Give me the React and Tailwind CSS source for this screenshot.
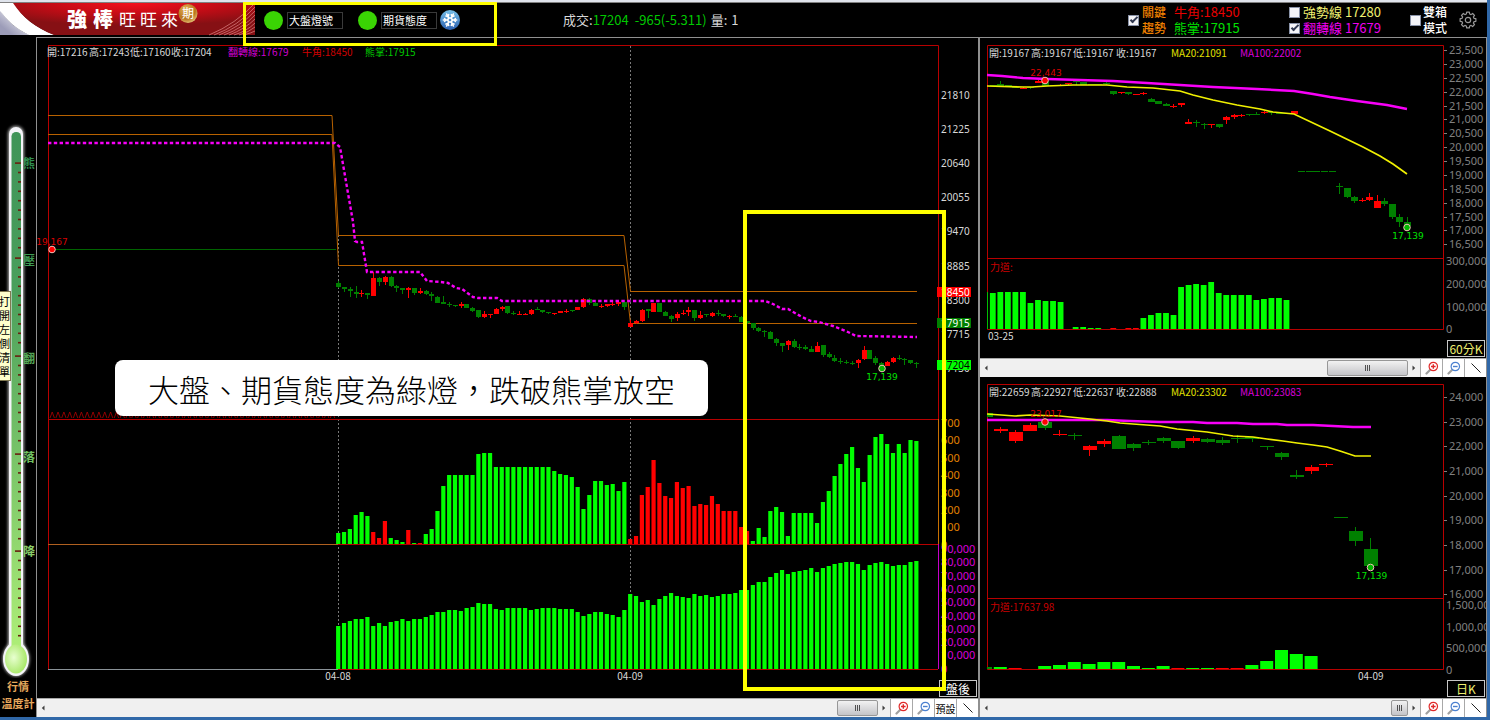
import React, { useState } from 'react';
import { Snowflake } from 'lucide-react';

// Candle rows: [color, body top, body bottom, high, low], three units to a chart pixel
const mainCandles = [
    ['g', 189, 201, 184, 203], ['g', 201, 207, 201, 215], ['g', 207, 213, 201, 230], ['g', 215, 223, 199, 235], ['r', 219, 223, 209, 231],
    ['g', 219, 225, 219, 237], ['r', 174, 227, 155, 229], ['g', 174, 186, 172, 197], ['r', 171, 186, 168, 196], ['g', 171, 198, 168, 202],
    ['g', 198, 203, 196, 215], ['g', 203, 209, 203, 221], ['r', 203, 210, 201, 233], ['g', 204, 219, 203, 225], ['r', 213, 219, 205, 221],
    ['g', 212, 223, 211, 225], ['g', 223, 228, 217, 242], ['g', 230, 248, 229, 249], ['g', 247, 252, 227, 253], ['g', 252, 256, 246, 262],
    ['g', 256, 259, 254, 261], ['r', 252, 259, 247, 264], ['g', 252, 264, 251, 265], ['g', 264, 272, 262, 277], ['g', 271, 291, 270, 293],
    ['r', 283, 291, 273, 293], ['r', 282, 285, 282, 294], ['r', 267, 282, 264, 283], ['r', 262, 267, 258, 273], ['g', 259, 279, 258, 282],
    ['g', 279, 282, 273, 286], ['r', 281, 284, 274, 285], ['r', 281, 284, 280, 285], ['r', 269, 281, 267, 285], ['g', 267, 270, 262, 271],
    ['g', 270, 277, 269, 279], ['g', 277, 280, 275, 281], ['r', 279, 282, 278, 285], ['r', 273, 279, 272, 280], ['r', 272, 276, 268, 278],
    ['g', 270, 273, 269, 277], ['r', 262, 270, 261, 271], ['r', 237, 262, 233, 263], ['g', 237, 249, 233, 255], ['g', 249, 258, 247, 259],
    ['r', 257, 261, 253, 264], ['r', 252, 258, 251, 261], ['r', 252, 255, 245, 258], ['r', 247, 251, 241, 257], ['g', 246, 261, 245, 269],
    ['r', 309, 320, 300, 321], ['r', 304, 309, 300, 311], ['r', 269, 304, 267, 307], ['g', 268, 274, 266, 293], ['r', 250, 275, 248, 277],
    ['g', 249, 275, 248, 276], ['g', 276, 287, 272, 289], ['g', 287, 296, 284, 306], ['r', 281, 294, 276, 303], ['r', 278, 282, 269, 284],
    ['r', 271, 277, 261, 288], ['g', 271, 294, 269, 303], ['r', 284, 294, 272, 297], ['g', 282, 286, 281, 291], ['r', 279, 287, 276, 290],
    ['g', 278, 282, 269, 288], ['g', 282, 288, 281, 291], ['r', 288, 291, 284, 297], ['g', 288, 291, 282, 292], ['g', 291, 305, 289, 306],
    ['g', 304, 310, 303, 311], ['g', 309, 325, 308, 329], ['g', 325, 333, 322, 336], ['g', 333, 336, 331, 352], ['g', 335, 357, 333, 358],
    ['g', 357, 370, 353, 377], ['g', 370, 378, 368, 395], ['r', 363, 375, 359, 390], ['g', 362, 381, 356, 385], ['g', 380, 383, 372, 390],
    ['g', 382, 386, 374, 391], ['g', 386, 395, 378, 397], ['r', 377, 395, 366, 397], ['g', 376, 404, 374, 410], ['g', 403, 410, 397, 415],
    ['g', 413, 423, 406, 426], ['g', 423, 427, 413, 433], ['g', 426, 429, 419, 433], ['g', 428, 431, 422, 435], ['r', 420, 430, 416, 444],
    ['r', 391, 418, 377, 420], ['g', 391, 416, 389, 417], ['g', 415, 428, 408, 434], ['g', 428, 443, 427, 448], ['r', 426, 437, 423, 439],
    ['r', 414, 426, 412, 428], ['g', 413, 416, 406, 421], ['g', 416, 421, 415, 434], ['g', 421, 429, 419, 432], ['g', 430, 433, 426, 444],
];

const hourCandles = [
    ['g', 134, 137, 134, 137], ['g', 133, 137, 123, 138], ['g', 136, 139, 136, 139], ['g', 142, 145, 142, 145], ['r', 143, 147, 141, 148],
    ['g', 142, 145, 142, 146], ['r', 122, 129, 121, 130], ['g', 122, 138, 118, 139], ['g', 136, 139, 136, 139], ['r', 134, 137, 133, 139],
    ['r', 130, 133, 130, 134], ['g', 122, 126, 117, 136], ['g', 126, 134, 126, 135], ['g', 131, 134, 131, 134], ['g', 131, 134, 131, 134],
    ['g', 129, 132, 127, 136], ['g', 153, 163, 152, 166], ['r', 156, 160, 155, 161], ['g', 157, 161, 156, 166], ['r', 162, 165, 162, 165],
    ['r', 159, 162, 156, 166], ['g', 176, 185, 174, 187], ['g', 183, 192, 183, 192], ['g', 192, 197, 190, 198], ['r', 197, 200, 193, 204],
    ['r', 190, 195, 188, 201], ['r', 245, 251, 236, 252], ['g', 246, 250, 239, 260], ['g', 251, 254, 249, 266], ['r', 252, 256, 251, 264],
    ['g', 253, 260, 251, 264], ['r', 231, 240, 229, 251], ['r', 225, 230, 223, 236], ['r', 225, 228, 221, 232], ['g', 222, 226, 222, 227],
    ['g', 222, 225, 215, 226], ['r', 215, 220, 212, 223], ['g', 216, 219, 212, 225], ['g', 218, 221, 218, 221], ['g', 219, 222, 219, 222],
    ['r', 213, 221, 213, 221], ['g', 393, 395, 393, 395], ['g', 393, 395, 393, 395], ['g', 393, 395, 393, 395], ['g', 393, 395, 393, 395],
    ['g', 393, 395, 393, 395], ['g', 438, 442, 429, 461], ['g', 444, 471, 443, 474], ['g', 472, 482, 468, 490], ['r', 480, 483, 474, 487],
    ['r', 472, 480, 460, 484], ['r', 483, 503, 466, 504], ['g', 482, 493, 474, 498], ['g', 493, 530, 492, 538], ['g', 531, 547, 523, 561],
    ['g', 547, 558, 530, 560],
];

const dayCandles = [
    ['r', 148, 153, 141, 158], ['r', 156, 183, 151, 188], ['r', 134, 152, 130, 153], ['g', 127, 143, 122, 150], ['r', 163, 166, 150, 167],
    ['g', 166, 169, 159, 180], ['r', 197, 211, 195, 228], ['r', 183, 192, 177, 201], ['g', 167, 206, 165, 208], ['g', 193, 204, 190, 212],
    ['g', 187, 190, 179, 194], ['g', 173, 183, 170, 188], ['g', 183, 204, 182, 206], ['r', 174, 183, 169, 188], ['g', 177, 186, 174, 188],
    ['g', 179, 188, 171, 194], ['g', 173, 175, 166, 189], ['g', 172, 177, 170, 185], ['g', 198, 202, 197, 211], ['g', 219, 230, 216, 241],
    ['g', 284, 291, 271, 298], ['r', 261, 274, 254, 283], ['r', 253, 256, 248, 262], ['g', 411, 413, 411, 413], ['g', 454, 482, 442, 498],
    ['g', 507, 557, 475, 558],
];

// Bar heights, a negative number is a red bar, zero is an empty period
const powerBars = [
    11, 12, 15, 29, 32, 28, -12, -6, -23, 6, 4, 2, -14, 1, -1, 10, 15, 33, 58, 69, 69, 69, 69, 69, 90, 91, 91,
    77, 77, 77, 77, 77, 77, 77, 77, 77, 77, 73, 70, 69, 67, 57, 35, 49, 63, 63, 59, 60, 53, 62,
    -5, -8, -49, -57, -84, -61, -48, -46, -62, -56, -58, -38, -40, -39, -48, -40, -33, -33, -33, -17, -13,
    3, 16, 7, 33, 37, 32, 8, 31, 31, 31, 31, 21, 42, 53, 68, 80, 90, 97, 76, 62, 89, 107, 110, 100, 91, 100, 91, 104, 103,
];

const volumeBars = [
    43, 46, 48, 50, 50, 52, 43, 46, 43, 47, 48, 50, 48, 50, 50, 52, 54, 57, 57, 59, 59, 58, 61, 62, 66, 65, 65, 60, 59, 61, 61, 61, 61, 59,
    60, 61, 61, 61, 60, 60, 60, 57, 53, 55, 57, 57, 55, 54, 52, 59,
    75, 73, 67, 69, 64, 70, 73, 76, 73, 72, 71, 75, 73, 74, 72, 73, 75, 75, 76, 79, 79, 84, 87, 87, 92, 96, 99, 95, 97, 98, 99, 101, 97,
    101, 103, 105, 106, 107, 107, 105, 99, 104, 106, 107, 105, 103, 104, 104, 107, 108,
];

const hourBars = [
    36, 37, 37, 37, 37, 26, 29, 28, 28, 27, 0, 2, 2, 1, 1, 0, -1, 0, -1, -1, 11, 14, 16, 16, 14, 42, 44, 45, 44, 47,
    36, 34, 34, 34, 34, 29, 30, 31, 31, 29, 0, 0, 0, 0, 0, 0, 0, 0, 0, 0, 0, 0, 0, 0, 0,
];

const dayBars = [2, -1, 0, 3, 4, 7, 5, 7, 7, 3, 1, 3, -1, 1, 1, -1, -1, 4, 8, 19, 15, 13, 0, 0, 0];

const hourMa100 = '987,75 1002,76 1023,78 1047,79 1080,80 1113,81 1147,83 1180,85 1213,87 1257,89 1294,91 1313,94 1330,97 1357,101 1387,105 1407,109';
const hourMa20 = '987,86 1023,87 1032,87 1047,86 1073,85 1107,85 1127,87 1153,88 1180,91 1193,95 1213,100 1237,105 1260,109 1273,112 1294,114 1330,131 1363,147 1380,156 1393,164 1407,174';
const dayMa100 = '987,420 1107,420 1130,421 1160,422 1193,422 1207,423 1237,423 1253,424 1277,424 1287,425 1313,425 1333,426 1353,427 1371,427';
const dayMa20 = '987,414 1015,416 1030,415 1060,416 1090,419 1107,421 1120,423 1133,424 1160,426 1177,429 1207,432 1233,436 1253,437 1267,439 1283,441 1297,443 1313,445 1327,447 1340,451 1355,456 1371,456';
const flipLine = '48,143 335,143 340,147 353,222 355,241 357,242 362,242 367,272 420,272 427,281 441,282 448,283 456,288 462,289 473,297 478,298 497,298 502,301 765,301 773,304 782,309 788,309 802,317 811,321 819,322 833,326 848,332 856,336 917,337';

const Label = ({ x, y, anchor = 'start', className, children }) => (
    <text x={x} y={y} textAnchor={anchor} className={className}>{children}</text>
);

const Candles = ({ rows, x0, step, width, top }) => (
    <g shapeRendering="crispEdges">
        {rows.map(([color, bodyTop, bodyBottom, high, low], i) => {
            const x = x0 + step * i;
            const fill = color === 'r' ? '#ff0000' : '#008000';
            return (
                <g key={i} fill={fill}>
                    <rect x={Math.floor(x)} y={top + high / 3} width="1" height={(low - high) / 3} />
                    <rect x={x - width / 2} y={top + bodyTop / 3} width={width} height={Math.max(1, (bodyBottom - bodyTop) / 3)} />
                </g>
            );
        })}
    </g>
);

const Bars = ({ rows, x0, step, width, base }) => (
    <g>
        {rows.map((value, i) => {
            const height = Math.abs(value) || 1;
            const fill = value > 0 ? '#00ff00' : value < 0 ? '#ff0000' : '#8aa0a8';
            return <rect key={i} x={x0 + step * i - width / 2} y={value === 0 ? base : base - height} width={width} height={height} fill={fill} />;
        })}
    </g>
);

const Marker = ({ x, y, fill }) => <circle cx={x} cy={y} r="3.3" fill={fill} stroke="#f0c0b8" strokeWidth="1" />;

const Banner = () => (
    <svg viewBox="0 3 255 33" className="h-[33px] w-[255px] shrink-0 self-start" aria-label="強棒旺旺來">
        <defs>
            <radialGradient id="bannerRed" cx="0.5" cy="0" r="0.7">
                <stop offset="0" stopColor="#f4101c" />
                <stop offset="0.5" stopColor="#c40c16" />
                <stop offset="1" stopColor="#861014" />
            </radialGradient>
            <linearGradient id="bannerGrey" x1="0" y1="1" x2="1" y2="0">
                <stop offset="0.2" stopColor="#9c9cb8" />
                <stop offset="0.9" stopColor="#ffffff" />
            </linearGradient>
            <radialGradient id="gold" cx="0.4" cy="0.3" r="0.8">
                <stop offset="0" stopColor="#e8b860" />
                <stop offset="0.6" stopColor="#b8741c" />
                <stop offset="1" stopColor="#f0d890" />
            </radialGradient>
        </defs>
        <path d="M0 10C8 22 18 30 30 35H0z" fill="url(#bannerGrey)" />
        <path d="M0 3H14C22 17 36 28 55 35H29C16 29 7 20 0 11z" fill="#ffffff" />
        <path d="M13 3H255V35H54C36 28 22 17 13 3z" fill="url(#bannerRed)" />
        <g stroke="#e08888" strokeWidth="0.7" fill="none">
            <path d="M209 35Q236 24 255 3M214 35Q238 26 255 7M219 35Q240 27 255 11M224 35Q243 28 255 15M229 35Q245 29 255 19M234 35Q247 31 255 23M239 35Q249 32 255 27M244 35Q251 33 255 31" />
        </g>
        <g fill="#ffffff">
            <text x="67" y="27" className="text-[20px] font-black">強</text>
            <text x="93" y="27" className="text-[20px] font-black">棒</text>
            <text x="119" y="26" className="text-[17px]">旺</text>
            <text x="140" y="26" className="text-[17px]">旺</text>
            <text x="161" y="26" className="text-[17px]">來</text>
        </g>
        <circle cx="188" cy="13.5" r="9.5" fill="url(#gold)" />
        <text x="188" y="18" textAnchor="middle" fill="#ffffff" className="text-[12px]">期</text>
    </svg>
);

// eight rounded teeth, four outline points each
const gearPoints = Array.from({ length: 8 }, (_, i) =>
    [[-0.27, 6.2], [-0.17, 8], [0.17, 8], [0.27, 6.2]]
        .map(([offset, radius]) => {
            const angle = (i * Math.PI) / 4 + offset;
            return `${(9 + radius * Math.sin(angle)).toFixed(2)},${(9 - radius * Math.cos(angle)).toFixed(2)}`;
        })
        .join(' ')
).join(' ');

const Gear = () => (
    <svg viewBox="0 0 18 18" className="size-[18px]" fill="none" stroke="#989898" strokeWidth="1.2" strokeLinejoin="round">
        <polygon points={gearPoints} />
        <circle cx="9" cy="9" r="2.7" />
    </svg>
);

const SignalLight = ({ id, label }) => (
    <div className="flex items-center gap-1">
        <span className="size-[19px] rounded-full bg-[#3ad404]" />
        <input
            id={id}
            aria-label={label}
            value={label}
            readOnly
            className="h-[17px] w-14 border border-[#3a3a3a] bg-black pl-px text-[11px] leading-none text-white outline-none"
        />
    </div>
);

const Check = ({ id, label, checked, onChange }) => (
    <input
        id={id}
        type="checkbox"
        aria-label={label}
        checked={checked}
        onChange={onChange}
        className="relative size-[11px] shrink-0 appearance-none border border-[#8a93a8] bg-[#f4f4f8] before:absolute before:left-[3px] before:-top-px before:hidden before:h-2 before:w-1 before:rotate-45 before:border-r-2 before:border-b-2 before:border-[#303850] checked:before:block"
    />
);

const Magnifier = ({ color, plus }) => (
    <svg viewBox="0 0 14 14" className="size-[14px]">
        <path d="M1.5 12.5L5 9" stroke="#a0a0a0" strokeWidth="2.2" strokeLinecap="round" />
        <circle cx="8.3" cy="5.5" r="4.2" fill="#ffffff" stroke={color} strokeWidth="1.2" />
        <path d={plus ? 'M6 5.5H10.6M8.3 3.2V7.8' : 'M6 5.5H10.6'} stroke={color} strokeWidth="1.4" />
    </svg>
);

const toolClass = 'flex w-[22px] items-center justify-center border-l border-[#a8a8a8] bg-white';

const ScrollRow = ({ thumb, withPreset }) => (
    <div className="flex h-[19px] border-t border-[#a8a8a8] bg-[#f0f0f0]">
        <button aria-label="向左" className="flex w-3 items-center justify-center">
            <svg viewBox="0 0 4 6" className="h-1.5 w-1"><path d="M3.5 0.5V5.5L0.8 3z" fill="#404040" /></svg>
        </button>
        <div className="flex flex-1 justify-end">
            <div className={`my-px flex items-center justify-center gap-px rounded-[2px] border border-[#979797] bg-linear-to-b from-[#f2f2f2] to-[#c4c4c8] ${thumb}`}>
                <span className="h-1.5 w-px bg-[#505050]" />
                <span className="h-1.5 w-px bg-[#505050]" />
                <span className="h-1.5 w-px bg-[#505050]" />
            </div>
        </div>
        <button aria-label="向右" className="flex w-3 items-center justify-center">
            <svg viewBox="0 0 4 6" className="h-1.5 w-1"><path d="M0.5 0.5V5.5L3.2 3z" fill="#404040" /></svg>
        </button>
        <button aria-label="放大" className={toolClass}><Magnifier color="#e02a2a" plus /></button>
        <button aria-label="縮小" className={toolClass}><Magnifier color="#4a80d0" /></button>
        {withPreset && <button className={`${toolClass} text-[10px] whitespace-nowrap text-black`}>預設</button>}
        <button aria-label="畫線" className={toolClass}>
            <svg viewBox="0 0 10 10" className="size-[10px]"><path d="M0.5 0.5L9.5 9.5" stroke="#202020" /></svg>
        </button>
    </div>
);

const PeriodButton = ({ color, children }) => (
    <button className={`absolute right-px bottom-px flex h-[17px] w-[38px] items-center justify-center border border-[#c8c8c8] bg-black text-[12px] leading-none ${color}`}>
        {children}
    </button>
);

const thermoLabels = [['熊', 163, '#2f8f50'], ['壓', 260, '#3f9c54'], ['翻', 358, '#55a858'], ['落', 457, '#70c060'], ['降', 551, '#88cc68']];
const majorTicks = [163, 258, 356, 454, 551];

const Thermometer = () => (
    <div className="relative flex flex-col overflow-hidden">
        <svg viewBox="0 37 36 641" className="w-9">
            <defs>
                <linearGradient id="tube" x1="0" y1="0" x2="0" y2="1">
                    <stop offset="0" stopColor="#3f9458" />
                    <stop offset="0.3" stopColor="#4a9f5c" />
                    <stop offset="1" stopColor="#b0f078" />
                </linearGradient>
                <radialGradient id="bulb" cx="0.4" cy="0.45" r="0.6">
                    <stop offset="0" stopColor="#e8ffd0" />
                    <stop offset="1" stopColor="#a8e868" />
                </radialGradient>
                <filter id="glow" x="-50%" width="200%"><feGaussianBlur stdDeviation="1.5" /></filter>
            </defs>
            <rect x="8" y="126" width="16" height="530" rx="8" fill="#b0b0b0" filter="url(#glow)" />
            <ellipse cx="16" cy="659" rx="13.5" ry="17.5" fill="#b0b0b0" filter="url(#glow)" />
            <rect x="9" y="127" width="14" height="530" rx="7" fill="#f4f4f8" />
            <ellipse cx="16" cy="659" rx="13" ry="17" fill="#f4f4f8" />
            <rect x="11.5" y="132" width="9.5" height="525" rx="4.5" fill="url(#tube)" />
            <ellipse cx="16" cy="659" rx="11" ry="14.5" fill="url(#bulb)" />
            {majorTicks.map((y) => (
                <g key={y} fill="#6a2010">
                    <rect x="15" y={y - 0.7} width="6" height="1.6" />
                    {[1, 2, 3, 4, 5, 6, 7, 8, 9].map((n) => (
                        <rect key={n} x="18" y={y + n * 9.4 - 0.7} width="3" height="1.6" />
                    ))}
                </g>
            ))}
            {thermoLabels.map(([text, y, color]) => (
                <text key={text} x="23" y={y + 5} fill={color} className="text-[12px] font-bold">{text}</text>
            ))}
        </svg>
        <div className="flex flex-col items-center text-[11px] leading-[17px] font-bold whitespace-nowrap text-[#e8a85c]">
            <span>行情</span>
            <span>溫度計</span>
        </div>
        <button className="absolute top-[254px] left-0 flex h-[90px] w-[11px] justify-end overflow-hidden border border-l-0 border-[#807850] bg-[#ffffcc] text-[11px] leading-[14px] text-black">
            <span className="w-[11px] shrink-0 py-[2px] break-all">打開左側清單</span>
        </button>
    </div>
);

const priceLabels = [21810, 21225, 20640, 20055, 19470, 18885, 18300, 17715, 17130];

const MainChart = () => (
    <svg viewBox="37 38 941 660" className="block h-auto w-full">
        {/* grid and frame */}
        <path d="M338.5 235V669M630.5 46V669" stroke="#787878" strokeDasharray="2 2" />
        <path d="M48 45.5H938.5V419M48.5 45V669M48 419.5H938M48 544.5H938M338 669.5H938" stroke="#b80000" fill="none" />
        <path d="M48 544.5H338" stroke="#b06020" />
        <path d="M48 669.5H338" stroke="#8a9298" />
        <path d="M938.5 419V544" stroke="#c87000" />
        <path d="M938.5 544V669" stroke="#c800c8" />

        {/* bull horn / bear paw levels */}
        <g stroke="#b86200" fill="none">
            <path d="M48 115.5H332L338.5 235.5H624L630.5 291.5H917" />
            <path d="M48 134.5H332L338.5 265.5H624L630.5 323.5H917" />
        </g>
        <path d="M48 249.5H336" stroke="#006400" />
        <Candles rows={mainCandles} x0={338.5} step={5.84} width={5} top={220} />
        <polyline points={flipLine} fill="none" stroke="#f800f8" strokeWidth="2.4" strokeDasharray="3.4 2.4" />

        <g stroke="#b00000" fill="none">
            {Array.from({ length: 49 }, (_, i) => (
                <path key={i} d={`M${50 + i * 5.84} 418l2.2 -6l2.2 6`} strokeWidth="0.8" />
            ))}
        </g>
        <Bars rows={powerBars} x0={338.2} step={5.84} width={4.2} base={544} />
        <Bars rows={volumeBars} x0={338.2} step={5.84} width={4.2} base={669} />

        <g className="text-[10px]">
            <Label x="47" y="56" className="fill-[#d8d8d8]">開:17216</Label>
            <Label x="89" y="56" className="fill-[#d8d8d8]">高:17243</Label>
            <Label x="130" y="56" className="fill-[#d8d8d8]">低:17160</Label>
            <Label x="171" y="56" className="fill-[#d8d8d8]">收:17204</Label>
            <Label x="228" y="56" className="fill-[#d000d0]">翻轉線:17679</Label>
            <Label x="302" y="56" className="fill-[#d00000]">牛角:18450</Label>
            <Label x="365" y="56" className="fill-[#00c800]">熊掌:17915</Label>
            <Label x="338" y="680" anchor="middle" className="fill-[#d8d8d8]">04-08</Label>
            <Label x="630" y="680" anchor="middle" className="fill-[#d8d8d8]">04-09</Label>
            <g className="font-['Noto_Sans']">
                {priceLabels.map((price, i) => (
                    <Label key={price} x="941" y={98.5 + i * 34.2} className="fill-[#d8d8d8]">{price}</Label>
                ))}
                <rect x="937" y="287" width="34" height="10" fill="#ff0000" />
                <rect x="937" y="318" width="34" height="10" fill="#008000" />
                <rect x="937" y="360" width="34" height="10" fill="#00ff00" />
                <Label x="941" y="296" className="fill-white">18450</Label>
                <Label x="941" y="327" className="fill-white">17915</Label>
                <Label x="941" y="369" className="fill-black">17204</Label>
            </g>
        </g>

        <g className="font-['Noto_Sans'] text-[11px]">
            {[700, 600, 500, 400, 300, 200, 100, 0].map((v, i) => (
                <Label key={v} x="941" y={427 + i * 17.4} className="fill-[#e08000]">{v}</Label>
            ))}
            {['90,000', '80,000', '70,000', '60,000', '50,000', '40,000', '30,000', '20,000', '10,000', '0'].map((v, i) => (
                <Label key={v} x="941" y={553 + i * 13.3} className="fill-[#d800d8]">{v}</Label>
            ))}
        </g>

        <Marker x={52} y={249.5} fill="#ff0000" />
        <Marker x={882} y={368.5} fill="#00b800" />
        <g className="font-['DejaVu_Sans'] text-[9px]">
            <Label x="52" y="245" anchor="middle" className="fill-[#d80000]">19,167</Label>
            <Label x="882" y="380" anchor="middle" className="fill-[#00e000]">17,139</Label>
        </g>
    </svg>
);

const SideChart = ({ top, height, candles, candleX, step, candleWidth, bars, barX, barWidth, ma100, ma20, legend, split, prices, priceY, priceStep, power, powerY, powerStep, powerTitle, high, low, date, edge }) => (
    <svg viewBox={`980 ${top} 506 ${height}`} className="block h-auto w-full">
        <Bars rows={bars} x0={barX} step={step} width={barWidth} base={split + 70.5} />
        <path d={`M987.5 ${legend - 8}H1443.5V${split + 71}H987.5zM987 ${split}H1443`} stroke="#b80000" fill="none" />
        {edge}
        <Candles rows={candles} x0={candleX} step={step} width={candleWidth} top={top === 38 ? 40 : 380} />
        <polyline points={ma100} fill="none" stroke="#f800f8" strokeWidth="2.4" />
        <polyline points={ma20} fill="none" stroke="#f0f000" strokeWidth="1.7" />

        <g className="text-[10px]">
            {power.legend.map(([text, x, color]) => (
                <text key={x} x={x} y={legend + 3} fill={color}>{text}</text>
            ))}
            <Label x="990" y={split + 12} className="fill-[#c80000]">{powerTitle}</Label>
            <Label x={date.x} y={date.y} className="fill-[#d8d8d8]">{date.text}</Label>
        </g>

        <g className="fill-[#808080] font-['Noto_Sans'] text-[11px]">
            {prices.map((price, i) => (
                <g key={price}>
                    <rect x="1444" y={Math.round(priceY + i * priceStep)} width="3" height="1" />
                    <text x="1449" y={priceY + 4 + i * priceStep}>{price}</text>
                </g>
            ))}
            {power.labels.map((label, i) => (
                <text key={label} x="1446" y={powerY + i * powerStep}>{label}</text>
            ))}
        </g>

        <Marker x={high.x} y={high.y} fill="#ff0000" />
        <Marker x={low.x} y={low.y} fill="#00b800" />
        <g className="font-['DejaVu_Sans'] text-[9px]">
            <Label x={high.x + 1} y={high.y - 5} anchor="middle" className="fill-[#d80000]">{high.text}</Label>
            <Label x={low.x + 1} y={low.y + 11} anchor="middle" className="fill-[#00e000]">{low.text}</Label>
        </g>
    </svg>
);

const hourPrices = ['23,500', '23,000', '22,500', '22,000', '21,500', '21,000', '20,500', '20,000', '19,500', '19,000', '18,500', '18,000', '17,500', '17,000', '16,500'];
const dayPrices = ['24,000', '23,000', '22,000', '21,000', '20,000', '19,000', '18,000', '17,000', '16,000'];

const makeLegend = (open, high, low, close, ma20, ma100) => [
    [`開:${open}`, 989, '#d8d8d8'],
    [`高:${high}`, 1031, '#d8d8d8'],
    [`低:${low}`, 1073, '#d8d8d8'],
    [`收:${close}`, 1116, '#d8d8d8'],
    [`MA20:${ma20}`, 1171, '#e0e000'],
    [`MA100:${ma100}`, 1240, '#d800d8'],
];

const App = () => {
    const [options, setOptions] = useState({ trend: true, strong: false, flip: true, box: false });

    const toggle = (name) => () => setOptions((prev) => ({ ...prev, [name]: !prev[name] }));

    return (
        <div className="flex min-h-screen flex-col border-r-[3px] border-b-[3px] border-[#3068a8] bg-black font-['Noto_Sans_CJK_TC',sans-serif] text-white">
            <div className="h-[3px] border-b border-[#808080] bg-[#e0e4ec]" />

            <header className="relative z-10 flex h-[34px] items-center">
                <Banner />
                <div className="relative ml-[9px] flex items-center">
                    <SignalLight id="marketLight" label="大盤燈號" />
                    <div className="w-[15px]" />
                    <SignalLight id="futuresLight" label="期貨態度" />
                    <span className="ml-[3px] flex size-5 items-center justify-center rounded-full bg-linear-to-b from-[#78c0e8] to-[#2c60b0]">
                        <Snowflake size={16} strokeWidth={2.5} />
                    </span>
                    {/* highlight around the lights */}
                    <div className="pointer-events-none absolute -top-2 -left-[21px] h-11 w-[254px] border-[3px] border-[#ffff00]" />
                </div>

                <div className="ml-[103px] flex items-center text-[13px] leading-4 whitespace-pre text-[#d8d8d8]">
                    <span>成交:</span>
                    <span className="text-[#00c800]">17204</span>
                    <span className="ml-[6px] text-[#00c800]">-965(-5.311)</span>
                    <span className="ml-1">量:</span>
                    <span className="ml-1">1</span>
                </div>

                <div className="ml-auto flex items-center text-[13px] leading-4 whitespace-nowrap">
                    <Check id="trend" label="關鍵趨勢" checked={options.trend} onChange={toggle('trend')} />
                    <label htmlFor="trend" className="ml-[3px] w-6 text-[12px] font-medium whitespace-normal text-[#f08000]">關鍵趨勢</label>
                    <div className="ml-2 w-[115px]">
                        <div className="text-[#e80000]">牛角:18450</div>
                        <div className="text-[#00e000]">熊掌:17915</div>
                    </div>
                    <div className="w-[121px]">
                        <div className="flex items-center gap-[3px] text-[#f0f070]">
                            <Check id="strong" label="強勢線" checked={options.strong} onChange={toggle('strong')} />
                            <label htmlFor="strong">強勢線 17280</label>
                        </div>
                        <div className="flex items-center gap-[3px] text-[#f000f0]">
                            <Check id="flip" label="翻轉線" checked={options.flip} onChange={toggle('flip')} />
                            <label htmlFor="flip">翻轉線 17679</label>
                        </div>
                    </div>
                    <Check id="box" label="雙箱模式" checked={options.box} onChange={toggle('box')} />
                    <label htmlFor="box" className="ml-[2px] w-6 text-[12px] font-medium whitespace-normal">雙箱模式</label>
                    <button aria-label="設定" className="mr-[10px] ml-3"><Gear /></button>
                </div>
            </header>

            <main className="grid flex-1 grid-cols-[36px_minmax(0,944fr)_minmax(0,507fr)]">
                <Thermometer />

                <section className="border-t border-r-2 border-l border-[#909090]">
                    <div className="relative">
                        <MainChart />
                        <PeriodButton color="text-white">盤後</PeriodButton>
                        <div className="absolute top-[26%] left-[75%] h-[73%] w-[21.6%] border-4 border-[#ffff00]" />
                        <p className="absolute top-[322px] left-[78px] flex h-14 items-center rounded-lg bg-white px-[33px] text-[31px] leading-none font-light whitespace-nowrap text-black">
                            大盤、期貨態度為綠燈，跌破熊掌放空
                        </p>
                    </div>
                    <ScrollRow thumb="w-[41px]" withPreset />
                </section>

                <section className="border-t border-r border-[#909090]">
                    <div className="relative">
                        <SideChart
                            top={38} height={320} legend={53.5} split={258.5}
                            candles={hourCandles} candleX={993.2} step={7.53} candleWidth={7}
                            bars={hourBars} barX={992.8} barWidth={5.8}
                            ma100={hourMa100} ma20={hourMa20}
                            prices={hourPrices} priceY={50} priceStep={13.88}
                            powerY={265} powerStep={22.8} powerTitle="力道:"
                            power={{ labels: ['300,000', '200,000', '100,000', '0'], legend: makeLegend(19167, 19167, 19167, 19167, 21091, 22002) }}
                            high={{ x: 1045, y: 80.5, text: '22,443' }}
                            low={{ x: 1407, y: 227.5, text: '17,139' }}
                            date={{ x: 988, y: 340, text: '03-25' }}
                            edge={<rect x="987" y="292" width="1" height="37" fill="#00c000" />}
                        />
                        <PeriodButton color="text-[#f0f070]">60分K</PeriodButton>
                    </div>
                    <ScrollRow thumb="w-[81px]" />
                    <div className="relative">
                        <SideChart
                            top={377} height={321} legend={392.5} split={598.5}
                            candles={dayCandles} candleX={1000.7} step={14.8} candleWidth={14}
                            bars={dayBars} barX={1000.3} barWidth={13}
                            ma100={dayMa100} ma20={dayMa20}
                            prices={dayPrices} priceY={397} priceStep={24.67}
                            powerY={609} powerStep={21.5} powerTitle="力道:17637.98"
                            power={{ labels: ['1,500,000', '1,000,000', '500,000', '0'], legend: makeLegend(22659, 22927, 22637, 22888, 23302, 23083) }}
                            high={{ x: 1045, y: 422, text: '23,017' }}
                            low={{ x: 1370.5, y: 567.5, text: '17,139' }}
                            date={{ x: 1358, y: 680, text: '04-09' }}
                            edge={<path d="M987 413H993V417H987zM987 667H992V669H987z" fill="#009000" />}
                        />
                        <PeriodButton color="text-[#f0f070]">日K</PeriodButton>
                    </div>
                    <ScrollRow thumb="w-[17px]" />
                </section>
            </main>
        </div>
    );
};

export default App;
